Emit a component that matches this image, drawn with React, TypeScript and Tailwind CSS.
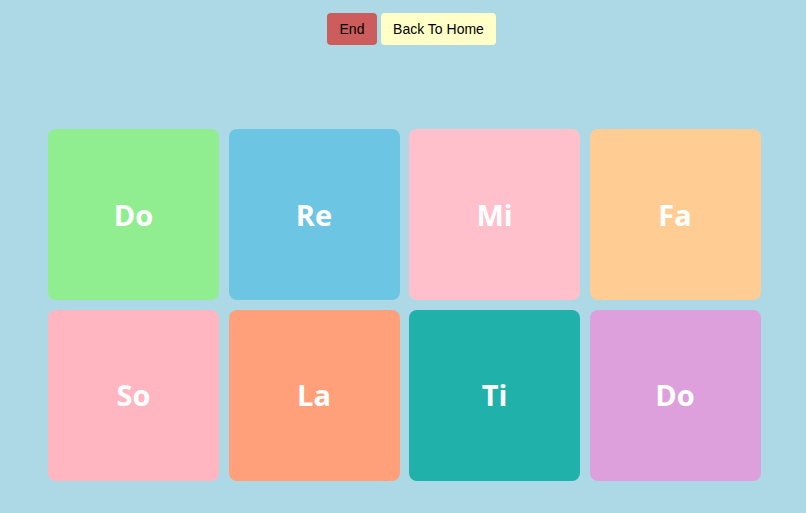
const NOTES = [
  { name: 'Do', color: 'bg-[#90ee90]' },
  { name: 'Re', color: 'bg-[#6cc5e2]' },
  { name: 'Mi', color: 'bg-[#ffc0cb]' },
  { name: 'Fa', color: 'bg-[#ffcc94]' },
  { name: 'So', color: 'bg-[#ffb6c1]' },
  { name: 'La', color: 'bg-[#ffa07a]' },
  { name: 'Ti', color: 'bg-[#20b2aa]' },
  { name: 'Do', color: 'bg-[#dda0dd]' },
];

export default function App() {
  return (
    <div className="w-[806px] h-[513px] bg-[#add8e6] overflow-hidden font-['Liberation_Sans',Arial,sans-serif]">
      <div className="flex justify-center gap-[4px] pt-[13px] pl-[17px]">
        <button className="w-[50px] h-[32px] rounded-[4px] bg-[#cd5c5c] text-black text-[14px]">End</button>
        <button className="w-[115px] h-[32px] rounded-[4px] bg-[#ffffc8] text-black text-[14px]">Back To Home</button>
      </div>

      <div className="grid grid-cols-[repeat(4,171px)] gap-[9.5px] mt-[84px] ml-[48px]">
        {NOTES.map((n, i) => (
          <div
            key={i}
            className={`${n.color} w-[171px] h-[171px] rounded-[8px] flex items-center justify-center text-white font-bold text-[29px] font-['Open_Sans','Lato',sans-serif]`}
          >
            {n.name}
          </div>
        ))}
      </div>
    </div>
  );
}
